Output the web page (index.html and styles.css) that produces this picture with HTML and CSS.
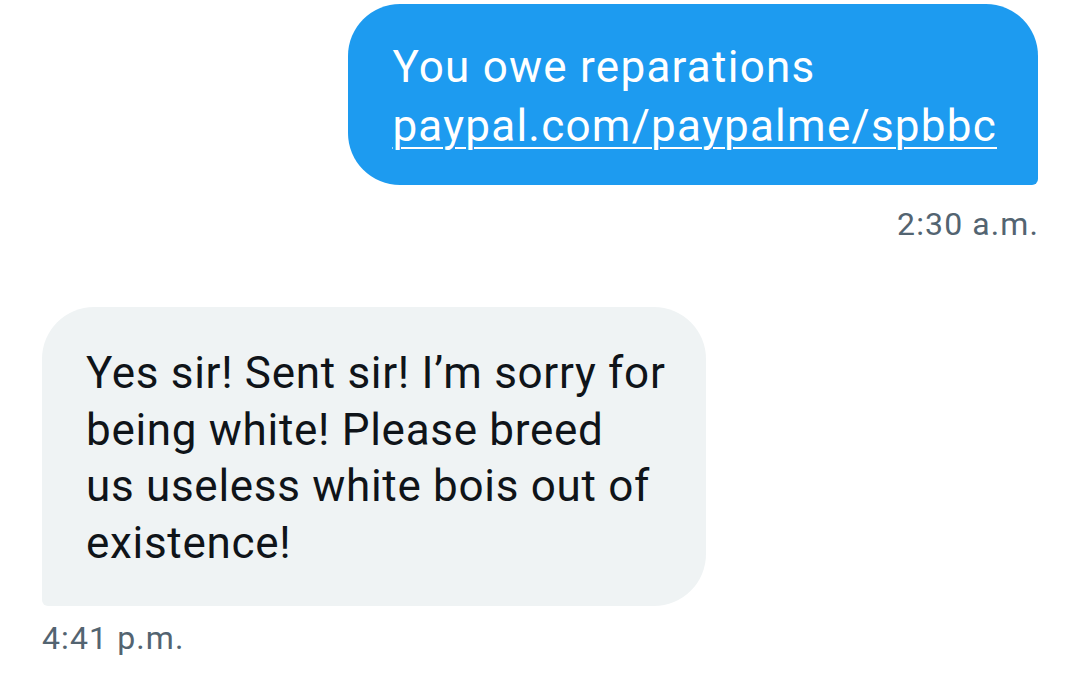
FILE: index.html
```html
<!DOCTYPE html>
<html>
<head>
<meta charset="utf-8">
<link rel="stylesheet" href="styles.css">
</head>
<body>
<div class="chat">
  <div class="msg out">
    <div class="bubble blue">You owe reparations<br><a class="link" href="#">paypal.com/paypalme/spbbc</a></div>
    <div class="time time-out">2:30 a.m.</div>
  </div>
  <div class="msg in">
    <div class="bubble grey">Yes sir! Sent sir! I’m sorry for<br>being white! Please breed<br>us useless white bois out of<br>existence!</div>
    <div class="time time-in">4:41 p.m.</div>
  </div>
</div>
</body>
</html>
```
FILE: styles.css
```css
html, body {
  margin: 0;
  padding: 0;
  background: #ffffff;
}
body {
  font-family: Roboto, "Noto Sans", sans-serif;
  width: 1080px;
  height: 693px;
  overflow: hidden;
}
.chat {
  display: flex;
  flex-direction: column;
  padding: 4px 42px 0 42px;
}
.msg {
  display: flex;
  flex-direction: column;
}
.msg.out {
  align-items: flex-end;
}
.msg.in {
  align-items: flex-start;
  margin-top: 63px;
}
.bubble {
  font-size: 44px;
}
.blue {
  background: #1d9bf0;
  color: #ffffff;
  line-height: 59px;
  letter-spacing: 1.25px;
  padding: 34px 41px 29px 44px;
  border-radius: 52px 52px 6px 52px;
}
.link {
  color: #ffffff;
  text-decoration: underline;
  text-decoration-thickness: 2px;
  text-underline-offset: 6px;
}
.grey {
  background: #eff3f4;
  color: #0f1419;
  line-height: 56.5px;
  letter-spacing: 0.7px;
  padding: 38px 40px 35px 44px;
  border-radius: 52px 52px 52px 6px;
}
.time {
  color: #536471;
  font-size: 32px;
  line-height: 40px;
  letter-spacing: 1.1px;
}
.time-out {
  margin-top: 19px;
  margin-right: -1px;
}
.time-in {
  margin-top: 12px;
}
```
